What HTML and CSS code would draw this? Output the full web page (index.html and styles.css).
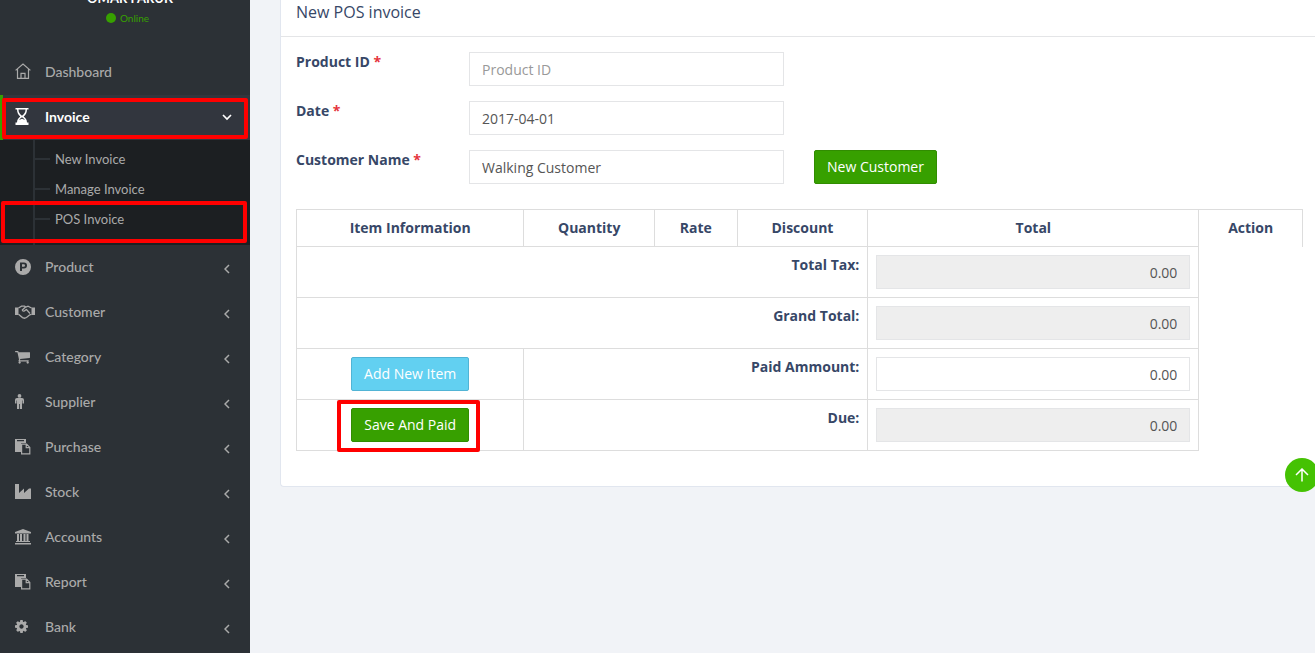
FILE: index.html
```html
<!DOCTYPE html>
<html lang="en">
<head>
<meta charset="utf-8">
<meta name="viewport" content="width=device-width, initial-scale=1">
<title>New POS invoice</title>
<link rel="stylesheet" href="styles.css">
</head>
<body>
<svg class="defs" aria-hidden="true">
  <symbol id="chev" viewBox="0 0 6 10"><path d="M5 1 1 5l4 4" fill="none" stroke="currentColor" stroke-width="1.5"/></symbol>
  <symbol id="paste" viewBox="0 0 16 17"><path d="M0 1h11v4H6v9H0zM2 2v1.200h7V2z" fill="currentColor" fill-rule="evenodd"/><path d="M6.600 6.100h5l3.200 3.300v6.400H6.600zM11.200 6.100v3.600h3.600" fill="none" stroke="currentColor" stroke-width="1.200"/></symbol>
</svg>
<div class="app">
  <aside class="sidebar">
    <div class="user">
      <div class="user-name">OMAR FARUK</div>
      <div class="user-status"><span class="dot"></span>Online</div>
    </div>
    <nav class="menu">
      <a class="item" href="#"><span class="icon"><svg width="16" height="17" viewBox="0 0 16 17" fill="none" stroke="currentColor" stroke-width="1.200"><path d="M.6 7.400 8 1l7.400 6.400M2.500 6v9.400h11V6M6 15.400v-5h4v5"/></svg></span>Dashboard</a>
      <div class="group marked">
        <a class="item active" href="#"><span class="icon"><svg width="14" height="17" viewBox="0 0 14 17"><path d="M.5 0h13v1.600H12c0 3.400-1.500 5.400-3.300 6.900C10.500 10 12 11.700 12 14.400h1.500V17H.5v-2.600H2C2 11.700 3.500 10 5.300 8.500 3.500 7 2 5 2 1.600H.5zM3.500 1.600c0 2.800 1.300 4.700 3.500 6.200 2.200-1.500 3.500-3.400 3.500-6.200zM7 9.300c-1.400.8-2.300 1.700-2.900 2.700L7 10.800l2.900 1.200C9.300 11 8.400 10.100 7 9.300z" fill="currentColor" fill-rule="evenodd"/></svg></span>Invoice<svg class="down" width="10" height="7" viewBox="0 0 10 7"><path d="m1 1 4 4 4-4" fill="none" stroke="currentColor" stroke-width="1.700"/></svg></a>
      </div>
      <div class="submenu">
        <a class="subitem" href="#">New Invoice</a>
        <a class="subitem" href="#">Manage Invoice</a>
        <a class="subitem marked-sub" href="#">POS Invoice</a>
      </div>
      <a class="item" href="#"><span class="icon"><svg width="16" height="16" viewBox="0 0 16 16"><path d="M8 0a8 8 0 1 0 0 16A8 8 0 0 0 8 0zM5 3.500h4a2.800 2.800 0 0 1 0 6H7V12H5zM7 5.300v2.400h1.800a1.200 1.200 0 0 0 0-2.400z" fill="currentColor" fill-rule="evenodd"/></svg></span>Product<svg class="chev"><use href="#chev"/></svg></a>
      <a class="item" href="#"><span class="icon"><svg width="20" height="14" viewBox="0 0 20 14"><path d="M0 2.500h3.500v7.500H0zM16.500 2.500H20V10h-3.500z" fill="currentColor"/><path d="M3.500 3 6.500 1.200h3l1.500.8 2-.8 3.500 1.800M3.500 9.300l4 3.300 2 .6 2-.7 3-2.500 2-.7M10.500 2 7.300 5c.2 1.700 2 1.500 3.200 0l1-.5 3.500 4" fill="none" stroke="currentColor" stroke-width="1.300"/></svg></span>Customer<svg class="chev"><use href="#chev"/></svg></a>
      <a class="item" href="#"><span class="icon"><svg width="15" height="15" viewBox="64 64 1664 1600"><path fill="currentColor" d="M704 1536q0 52-38 90t-90 38-90-38-38-90 38-90 90-38 90 38 38 90zm896 0q0 52-38 90t-90 38-90-38-38-90 38-90 90-38 90 38 38 90zm128-1088v512q0 24-16.500 42.500t-40.500 21.500l-1044 122q13 60 13 70 0 16-24 64h920q26 0 45 19t19 45-19 45-45 19h-1024q-26 0-45-19t-19-45q0-11 8-31.500t16-36 21.500-40 15.500-29.500l-177-823h-204q-26 0-45-19t-19-45 19-45 45-19h256q16 0 28.500 6.500t19.500 15.500 13 24.500 8 26 5.500 29.500 4.500 26h1201q26 0 45 19t19 45z"/></svg></span>Category<svg class="chev"><use href="#chev"/></svg></a>
      <a class="item" href="#"><span class="icon"><svg width="9" height="15" viewBox="0 0 9 15"><circle cx="4.500" cy="1.900" r="1.900" fill="currentColor"/><path d="M2 4h5a2 2 0 0 1 2 2v3.500H7.500V6.500H7V15H4.900v-5h-.8v5H2V6.500h-.5v3H0V6a2 2 0 0 1 2-2z" fill="currentColor"/></svg></span>Supplier<svg class="chev"><use href="#chev"/></svg></a>
      <a class="item" href="#"><span class="icon"><svg width="16" height="17"><use href="#paste"/></svg></span>Purchase<svg class="chev"><use href="#chev"/></svg></a>
      <a class="item" href="#"><span class="icon"><svg width="16" height="15" viewBox="0 0 16 15"><path d="M0 0h4v9l5-4.500V9l5-4.500H16V15H0z" fill="currentColor"/></svg></span>Stock<svg class="chev"><use href="#chev"/></svg></a>
      <a class="item" href="#"><span class="icon"><svg width="16" height="16" viewBox="0 0 16 16"><path d="m8 0 8 3v1.500H0V3zM2 5h2v7h1V5h2v7h1.500V5h2v7h1V5h2v7H15v1H1v-1h1zM0 14h16v1.500H0z" fill="currentColor"/></svg></span>Accounts<svg class="chev"><use href="#chev"/></svg></a>
      <a class="item" href="#"><span class="icon"><svg width="16" height="17"><use href="#paste"/></svg></span>Report<svg class="chev"><use href="#chev"/></svg></a>
      <a class="item" href="#"><span class="icon"><svg width="13" height="13" viewBox="128 128 1536 1536"><path fill="currentColor" d="M1152 896q0-106-75-181t-181-75-181 75-75 181 75 181 181 75 181-75 75-181zm512-109v222q0 12-8 23t-20 13l-185 28q-19 54-39 91 35 50 107 138 10 12 10 25t-9 23q-27 37-99 108t-94 71q-12 0-26-9l-138-108q-44 23-91 38-16 136-29 186-7 28-36 28h-222q-14 0-24.500-8.500t-11.500-21.500l-28-184q-49-16-90-37l-141 107q-10 9-25 9-14 0-25-11-126-114-165-168-7-10-7-23 0-12 8-23 15-21 51-66.500t54-70.500q-27-50-41-99l-183-27q-13-2-21-12.500t-8-23.500v-222q0-12 8-23t19-13l186-28q14-46 39-92-40-57-107-138-10-12-10-24 0-10 9-23 26-36 98.500-107.500t94.500-71.500q13 0 26 10l138 107q44-23 91-38 16-136 29-186 7-28 36-28h222q14 0 24.500 8.500t11.500 21.500l28 184q49 16 90 37l142-107q9-9 24-9 13 0 25 10 129 119 165 170 7 8 7 22 0 12-8 23-15 21-51 66.500t-54 70.500q26 50 41 98l183 28q13 2 21 12.500t8 23.500z"/></svg></span>Bank<svg class="chev"><use href="#chev"/></svg></a>
    </nav>
  </aside>
  <main class="content">
    <form class="panel">
      <h1 class="panel-title">New POS invoice</h1>
      <div class="panel-body">
        <div class="fields">
          <label for="product">Product ID <span class="req">*</span></label>
          <input class="control" id="product" type="text" placeholder="Product ID">
          <label for="date">Date <span class="req">*</span></label>
          <input class="control" id="date" type="text" value="2017-04-01">
          <label for="customer">Customer Name <span class="req">*</span></label>
          <input class="control" id="customer" type="text" value="Walking Customer">
          <div class="extra"><button class="btn green" type="button">New Customer</button></div>
        </div>
        <table class="items">
          <colgroup><col class="c-item"><col class="c-qty"><col class="c-rate"><col class="c-disc"><col class="c-total"><col class="c-action"></colgroup>
          <thead>
            <tr><th>Item Information</th><th>Quantity</th><th>Rate</th><th>Discount</th><th>Total</th><th class="action">Action</th></tr>
          </thead>
          <tbody>
            <tr><td class="sum" colspan="4"><label for="tax">Total Tax:</label></td><td><input class="control num" id="tax" value="0.00" readonly></td></tr>
            <tr><td class="sum" colspan="4"><label for="grand">Grand Total:</label></td><td><input class="control num" id="grand" value="0.00" readonly></td></tr>
            <tr><td class="center"><button class="btn blue" type="button">Add New Item</button></td><td class="sum" colspan="3"><label for="paid">Paid Ammount:</label></td><td><input class="control num" id="paid" value="0.00"></td></tr>
            <tr><td class="center"><span class="marked-save"><button class="btn green" type="button">Save And Paid</button></span></td><td class="sum" colspan="3"><label for="due">Due:</label></td><td><input class="control num" id="due" value="0.00" readonly></td></tr>
          </tbody>
        </table>
      </div>
    </form>
  </main>
</div>
<button class="to-top" type="button" aria-label="Back to top"><svg width="14" height="14" viewBox="0 0 14 14"><path d="M7 13.500V1M1 7l6-6 6 6" fill="none" stroke="currentColor" stroke-width="1.500"/></svg></button>
</body>
</html>
```
FILE: styles.css
```css
* { box-sizing: border-box; }
body {
  margin: 0;
  overflow: hidden;
  background: #f1f3f7;
  color: #374767;
  font: 14px/20px "Open Sans", sans-serif;
}
.defs { display: none; }
.app { display: flex; min-height: 100vh; }

.sidebar {
  flex: 0 0 250px;
  height: 100vh;
  overflow: hidden;
  background: #2c3136;
  color: #aaa;
  font-family: Lato, sans-serif;
}
.user { margin-top: -12px; height: 62px; text-align: center; }
.user-name { padding-left: 10px; color: #fff; font-size: 13px; font-weight: 700; }
.user-status {
  display: flex;
  align-items: center;
  justify-content: center;
  gap: 4px;
  padding-left: 5px;
  color: #37a000;
  font-size: 10px;
}
.dot { width: 10px; height: 10px; border-radius: 50%; background: #37a000; }
.item {
  display: flex;
  align-items: center;
  height: 45px;
  padding: 0 20px 2px 15px;
  color: inherit;
  font-size: 14px;
  font-weight: 500;
  text-decoration: none;
}
.icon { display: flex; width: 30px; }
.chev, .down { margin-left: auto; }
.chev { width: 6px; height: 10px; margin-top: 4px; }
.down { margin-top: 2px; }
.item.active {
  padding-right: 18px;
  background: #32363e;
  border-left: 3px solid #37a000;
  padding-left: 12px;
  color: #fff;
  font-weight: 700;
}
.group { position: relative; }
.marked::after {
  content: "";
  position: absolute;
  inset: 3px 2px 1px 2px;
  border: 4px solid #f00;
  border-radius: 2px;
  pointer-events: none;
}
.submenu {
  position: relative;
  padding: 4px 0 11px;
  background: #1c1f22;
}
.submenu::before {
  content: "";
  position: absolute;
  top: 0;
  bottom: 0;
  left: 33px;
  width: 2px;
  background: #2c3136;
}
.subitem {
  display: flex;
  align-items: center;
  position: relative;
  height: 30px;
  padding-left: 55px;
  color: inherit;
  font-size: 13px;
  text-decoration: none;
}
.subitem::before {
  content: "";
  position: absolute;
  left: 35px;
  top: 14px;
  width: 15px;
  height: 2px;
  background: #2c3136;
}
.marked-sub::after {
  content: "";
  position: absolute;
  inset: -3px 3px -9px 1px;
  border: 4px solid #f00;
  border-radius: 2px;
}

.content { flex: 1; min-width: 0; padding-left: 30px; }
.panel {
  background: #fff;
  border: solid #e1e6ef;
  border-width: 0 0 1px 1px;
  border-radius: 0 0 0 4px;
}
.panel-title {
  margin: 0;
  padding: 2px 15px 14px;
  border-bottom: 1px solid #e4e5e7;
  font-size: 16px;
  font-weight: 400;
  line-height: 20px;
}
.panel-body { padding: 15px 12px 35px 15px; }
.fields {
  display: grid;
  grid-template-columns: 173fr 315fr 519fr;
  row-gap: 15px;
  margin-bottom: 25px;
}
.fields label { grid-column: 1; }
label, th { font-weight: 700; }
.req { color: #e5343d; }
.extra { padding-left: 30px; }
.control {
  display: block;
  width: 100%;
  height: 34px;
  padding: 0 12px;
  border: 1px solid #e4e5e7;
  border-radius: 0;
  background: #fff;
  color: #555;
  font: inherit;
}
.control::placeholder { color: #999; opacity: 1; }
.control[readonly] { background: #eee; }
.num { text-align: right; }
.btn {
  height: 34px;
  padding: 0 12px;
  border: 1px solid;
  border-radius: 2px;
  color: #fff;
  font: inherit;
}
.green { background: #37a000; border-color: #318d01; }
.blue { background: #62d0f1; border-color: #51b4d5; }

.items { width: 100%; table-layout: fixed; border-collapse: collapse; }
.c-item { width: 22.6%; }
.c-qty { width: 13%; }
.c-rate { width: 8.2%; }
.c-disc { width: 13%; }
.c-total { width: 32.9%; }
.c-action { width: 10.3%; }
th, td { padding: 8px; border: 1px solid #ddd; vertical-align: top; }
.action { border-bottom: 0; }
.sum { text-align: right; }
.center { text-align: center; }
.marked-save { display: inline-block; position: relative; }
.center > .btn, .marked-save { vertical-align: top; }
.marked-save .btn { display: block; }
.marked-save::after {
  content: "";
  position: absolute;
  inset: -8px -11px -10px -14px;
  border: 4px solid #f00;
  border-radius: 2px;
  pointer-events: none;
}

.to-top {
  position: fixed;
  right: -4px;
  bottom: 161px;
  display: flex;
  align-items: center;
  justify-content: center;
  width: 34px;
  height: 34px;
  padding: 0;
  border: 0;
  border-radius: 50%;
  background: #45c203;
  color: #fff;
}
```
